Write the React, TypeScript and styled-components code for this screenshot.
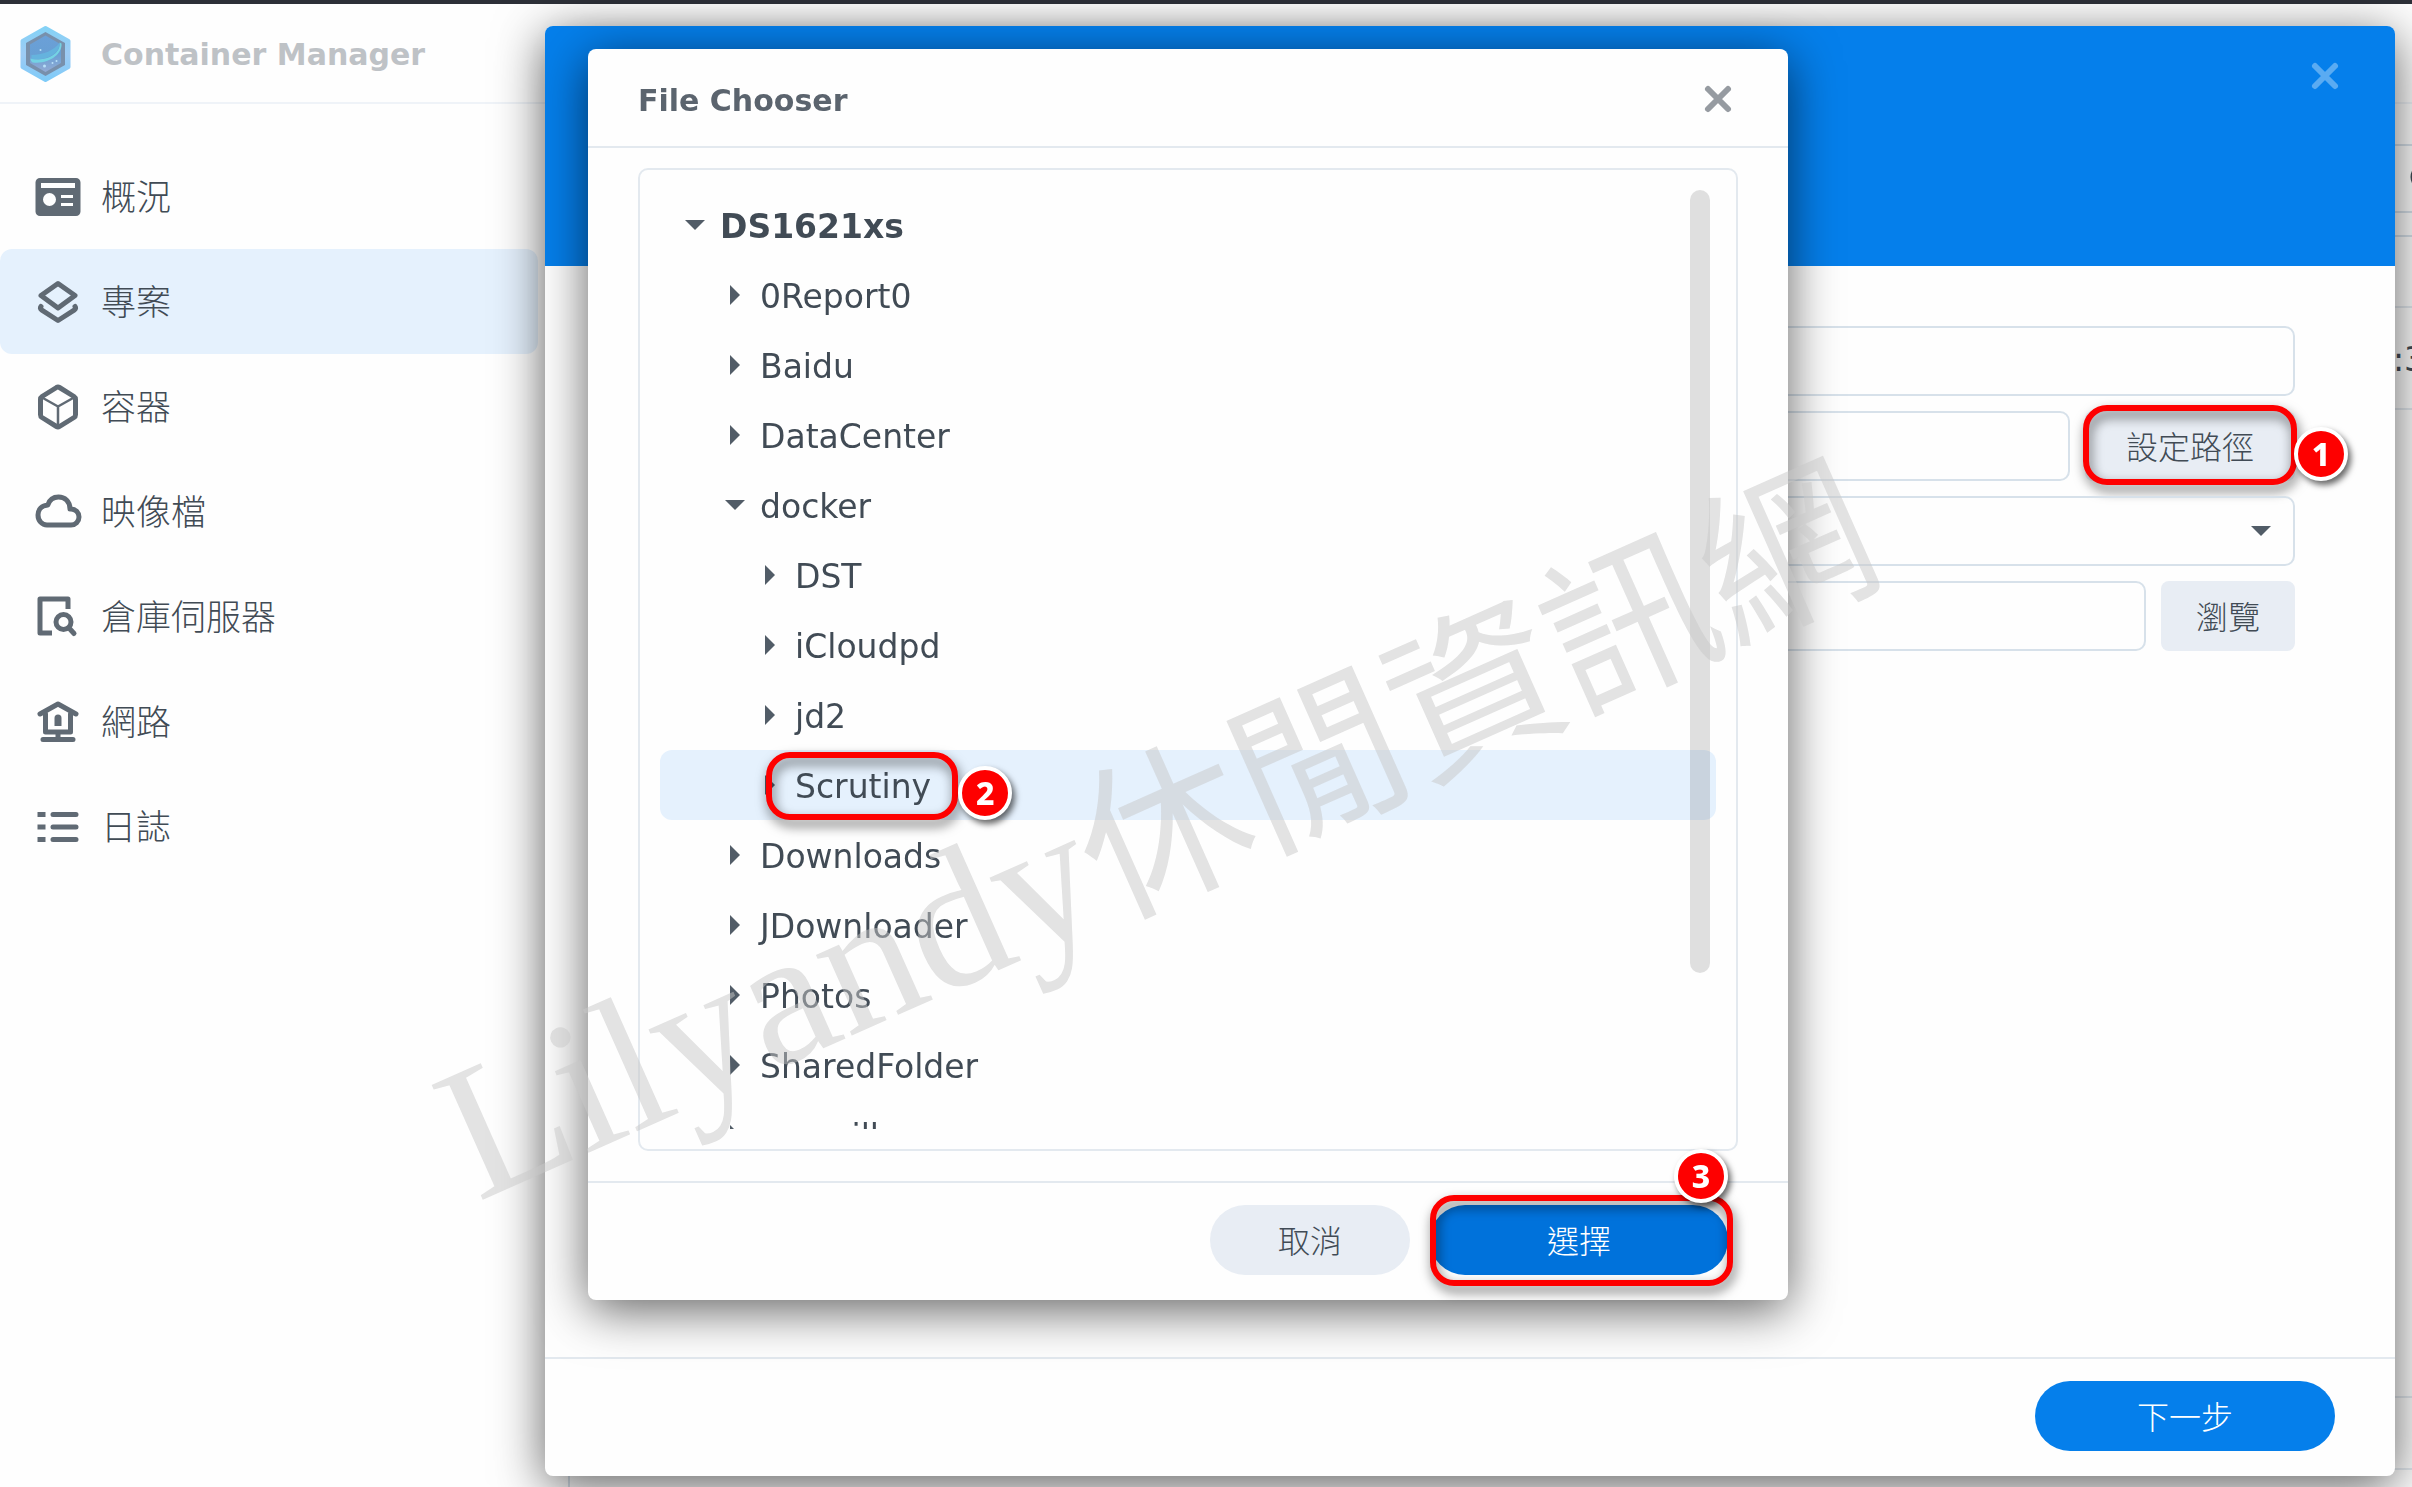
import React from "react";
import styled, { createGlobalStyle, css } from "styled-components";

const latin = `"DejaVu Sans", Verdana, "Noto Sans CJK TC", sans-serif`;
const cjk = `"Noto Sans CJK TC", "DejaVu Sans", sans-serif`;

const ink = "#414b55";
const muted = "#606a74";
const line = "#e3e9ef";
const fieldLine = "#d7e1ea";
const blue = "#057feb";

const GlobalStyle = createGlobalStyle`
  *, *::before, *::after { box-sizing: border-box; }
  body {
    margin: 0;
    background: #fefefe;
    color: ${ink};
    font-family: ${latin};
    overflow: hidden;
  }
  button, input, select { font: inherit; color: inherit; }
  button { border: 0; padding: 0; background: none; cursor: pointer; }
  ul { list-style: none; margin: 0; padding: 0; }
`;

/* ---------- application window ---------- */

const Page = styled.div`
  display: flex;
  flex-direction: column;
  height: 100vh;
  overflow: hidden;
`;

const TopStrip = styled.div`
  height: 4px;
  flex: none;
  background: #2d3038;
`;

const AppHeader = styled.header`
  display: flex;
  align-items: center;
  gap: 30px;
  height: 100px;
  padding: 2px 20px 0;
  flex: none;
  border-bottom: 2px solid #eff3f8;
`;

const AppTitle = styled.h1`
  margin: 0;
  padding-top: 2px;
  font-size: 30px;
  font-weight: 700;
  line-height: 40px;
  color: #bec2c6;
`;

const Workspace = styled.div`
  display: flex;
  flex: 1;
  min-height: 0;
`;

const Sidebar = styled.nav`
  width: 538px;
  padding-top: 40px;
  flex: none;
`;

const NavItem = styled.button<{ $active?: boolean }>`
  display: flex;
  align-items: center;
  gap: 18px;
  width: 100%;
  height: 105px;
  padding: 0 33px;
  border-radius: 12px;
  background: ${(p) => (p.$active ? "#e5f1fd" : "transparent")};
  font-family: ${cjk};
  font-size: 35px;
  font-weight: 300;
  line-height: 50px;
  text-align: left;
`;

const NavLabel = styled.span`
  padding-bottom: 4px;
`;

const Content = styled.main`
  display: flex;
  flex-direction: column;
  flex: 1;
  min-width: 0;
  padding: 40px 0 0 30px;
  overflow: hidden;
`;

const Toolbar = styled.div`
  display: flex;
  justify-content: flex-end;
  margin-bottom: 22px;
`;

const SearchBox = styled.button`
  width: 40px;
  height: 69px;
  padding-left: 36px;
  border: solid ${fieldLine};
  border-width: 2px 0 2px 2px;
  border-radius: 8px 0 0 8px;
  overflow: hidden;
  text-align: left;
`;

const Panel = styled.section`
  display: flex;
  flex-direction: column;
  flex: 1;
  border: solid ${fieldLine};
  border-width: 2px 0 0 2px;
`;

const PanelHead = styled.div`
  height: 71px;
  border-bottom: 2px solid ${line};
`;

const PanelRow = styled.div`
  display: flex;
  justify-content: flex-end;
  align-items: center;
  height: 102px;
  padding-top: 3px;
  border-bottom: 2px solid ${line};
  font-size: 33px;
  line-height: 40px;
`;

const Clock = styled.span`
  width: 19px;
  white-space: nowrap;
`;

const PanelFoot = styled.div`
  height: 74px;
  margin: auto 0 17px;
  border: solid ${line};
  border-width: 2px 0;
`;

/* ---------- dialogs ---------- */

const Layer = styled.div<{ $pad: string }>`
  position: fixed;
  inset: 0;
  display: flex;
  padding: ${(p) => p.$pad};
`;

const dialogBox = css`
  display: flex;
  flex-direction: column;
  border-radius: 8px;
  background: #fefefe;
  box-shadow: 0 10px 50px rgba(0, 0, 0, 0.62);
`;

const Wizard = styled.section`
  ${dialogBox}
  flex: 1;
`;

const WizardHead = styled.header`
  display: flex;
  justify-content: flex-end;
  align-items: flex-start;
  height: 240px;
  padding: 34px 54px;
  border-radius: 8px 8px 0 0;
  background: ${blue};
  color: #5aabf2;
`;

const CloseButton = styled.button`
  display: flex;
  width: 32px;
  height: 32px;
`;

const Form = styled.form`
  display: flex;
  flex-direction: column;
  gap: 15px;
  flex: 1;
  padding: 60px 100px 0 60px;
`;

const FormRow = styled.div`
  display: flex;
  gap: 15px;
  height: 70px;
`;

const Field = styled.input`
  flex: 1;
  min-width: 0;
  padding: 0 20px;
  border: 2px solid ${fieldLine};
  border-radius: 10px;
  background: transparent;
  font-size: 32px;
`;

const SelectWrap = styled.div`
  position: relative;
  display: flex;
  flex: 1;
`;

const SelectField = styled.select`
  flex: 1;
  padding: 0 60px 0 20px;
  border: 2px solid ${fieldLine};
  border-radius: 10px;
  background: transparent;
  appearance: none;
`;

const SelectCaret = styled.span`
  position: absolute;
  right: 24px;
  top: 30px;
  display: flex;
  pointer-events: none;
`;

const SquareButton = styled.button<{ $pad: number }>`
  height: 70px;
  padding: 0 ${(p) => p.$pad}px 3px;
  border-radius: 8px;
  background: #e8edf4;
  font-family: ${cjk};
  font-size: 32px;
  font-weight: 300;
  line-height: 46px;
`;

const DialogFoot = styled.footer`
  display: flex;
  justify-content: flex-end;
  gap: 20px;
  padding: 22px 60px 25px;
  border-top: 2px solid ${line};
`;

const PillButton = styled.button<{ $tone: "plain" | "primary" | "pressed"; $width: number }>`
  width: ${(p) => p.$width}px;
  height: 70px;
  padding-bottom: 2px;
  border-radius: 35px;
  background: ${(p) => ({ plain: "#e8edf4", primary: blue, pressed: "#0072db" }[p.$tone])};
  color: ${(p) => (p.$tone === "plain" ? ink : "#fff")};
  font-family: ${cjk};
  font-size: 32px;
  font-weight: 300;
  line-height: 46px;
`;

const Chooser = styled.section`
  ${dialogBox}
  width: 1200px;
`;

const ChooserHead = styled.header`
  display: flex;
  justify-content: space-between;
  align-items: center;
  height: 99px;
  flex: none;
  padding: 2px 54px 0 50px;
  border-bottom: 2px solid ${line};
  color: #969ba1;
`;

const ChooserTitle = styled.h2`
  margin: 0;
  padding-top: 4px;
  font-size: 30px;
  font-weight: 700;
  line-height: 40px;
  color: #5b646e;
`;

const TreeFrame = styled.div`
  flex: 1;
  min-height: 0;
  margin: 20px 50px 30px;
  padding: 20px;
  border: 2px solid ${line};
  border-radius: 10px;
`;

const TreeView = styled.div`
  position: relative;
  height: 100%;
  overflow: hidden;
`;

const TreeRow = styled.button<{ $depth: number; $selected?: boolean }>`
  display: flex;
  align-items: center;
  gap: 15px;
  width: 100%;
  height: 70px;
  padding-left: ${(p) => [25, 65, 100][p.$depth]}px;
  border-radius: 12px;
  background: ${(p) => (p.$selected ? "#e5f1fd" : "transparent")};
  font-size: 33px;
  font-weight: ${(p) => (p.$depth === 0 ? 700 : 400)};
  line-height: 40px;
  text-align: left;
`;

const Scrollbar = styled.div`
  position: absolute;
  top: 0;
  right: 6px;
  width: 20px;
  height: 783px;
  border-radius: 10px;
  background: rgba(0, 0, 0, 0.12);
`;

/* ---------- step marks ---------- */

const Marked = styled.span`
  position: relative;
  display: flex;
`;

const TreeLabel = styled(Marked)`
  padding-top: 4px;
`;

const Ring = styled.span<{ $inset: string }>`
  position: absolute;
  inset: ${(p) => p.$inset};
  border: 6px solid #fe0000;
  border-radius: 24px;
  filter: drop-shadow(2px 6px 6px rgba(0, 0, 0, 0.6));
  pointer-events: none;
`;

const Step = styled.span<{ $top: number; $right: number }>`
  position: absolute;
  top: ${(p) => p.$top}px;
  right: ${(p) => p.$right}px;
  width: 54px;
  height: 54px;
  border: 4px solid #fff;
  border-radius: 50%;
  background: #fe0000;
  box-shadow: 3px 4px 6px rgba(0, 0, 0, 0.6);
  color: #fff;
  font-family: "Noto Sans", sans-serif;
  font-size: 32px;
  font-weight: 800;
  line-height: 46px;
  text-align: center;
`;

const Watermark = styled.div`
  position: fixed;
  left: 48%;
  top: 56%;
  display: flex;
  align-items: baseline;
  transform: translate(-50%, -50%) rotate(-24deg);
  color: rgba(199, 199, 199, 0.5);
  font-family: "Liberation Serif", "Noto Sans CJK TC", serif;
  font-size: 170px;
  font-weight: 400;
  line-height: 170px;
  white-space: nowrap;
  pointer-events: none;
`;

const WatermarkLatin = styled.span`
  font-size: 192px;
`;

/* ---------- drawings ---------- */

const Cross = () => (
  <svg width="32" height="32" viewBox="0 0 32 32" fill="none" stroke="currentColor" strokeWidth="6" strokeLinecap="round">
    <path d="M6 6 26 26M26 6 6 26" />
  </svg>
);

const Caret = ({ open = false }: { open?: boolean }) => (
  <svg width="20" height="20" viewBox="0 0 20 20" fill="#515c67">
    {open ? <path d="M0 5h20L10 15z" /> : <path d="M5 0 15 10 5 20z" />}
  </svg>
);

const Icon = ({ children }: { children: React.ReactNode }) => (
  <svg width="50" height="50" viewBox="0 0 50 50" fill="none" stroke={muted} strokeWidth="5" strokeLinejoin="round" strokeLinecap="round">
    {children}
  </svg>
);

const Logo = () => (
  <svg width="51" height="58" viewBox="0 0 50 58">
    <defs>
      <linearGradient id="rim" x1="0" y1="0" x2="0" y2="1">
        <stop offset="0" stopColor="#84d2f6" />
        <stop offset="0.5" stopColor="#9ecbf5" />
        <stop offset="1" stopColor="#7fcbf8" />
      </linearGradient>
      <linearGradient id="core" x1="0" y1="0" x2="0" y2="1">
        <stop offset="0" stopColor="#6ba0d8" />
        <stop offset="0.5" stopColor="#689fd4" />
        <stop offset="1" stopColor="#93abd4" />
      </linearGradient>
    </defs>
    <path d="M25 3 48 16v26L25 55 2 42V16z" fill="url(#rim)" stroke="url(#rim)" strokeWidth="4" strokeLinejoin="round" />
    <path d="M25 7 44.500 18v22L25 51 5.500 40V18z" fill="#7890ac" />
    <path d="M25 10.500 40.500 19.500v18.500L25 47 9.500 38V19.500z" fill="url(#core)" />
    <path d="M39 17.500c2 10-12 20-29 16 0 2 1 3 2 4 17 2 30-9 29-19z" fill="#74d3e4" />
    <path d="M11 30c12 0 23-5 28-12 1 9-11 18-28 16z" fill="#65b3de" />
    <g fill="#b9e0f8">
      <circle cx="24" cy="41" r="1.500" />
      <circle cx="32" cy="38" r="1" />
      <circle cx="36" cy="36" r="1" />
      <circle cx="20" cy="25" r="1" />
    </g>
  </svg>
);

const navItems = [
  {
    label: "概況",
    icon: (
      <g stroke="none">
        <path
          fill={muted}
          fillRule="evenodd"
          d="M7 6h36a4.500 4.500 0 0 1 4.500 4.500v29A4.500 4.500 0 0 1 43 44H7a4.500 4.500 0 0 1-4.500-4.500v-29A4.500 4.500 0 0 1 7 6zM8 11v5h34v-5zM16.500 21a6.500 6.500 0 1 0 0 13 6.500 6.500 0 0 0 0-13zM28 23v3h12v-3zM28 31v3h12v-3z"
        />
      </g>
    ),
  },
  {
    label: "專案",
    active: true,
    icon: <path d="M25 6.500 42 18.500 25 31 8 18.500zM8 29.500c-1 1.500-.5 2.500.5 3.300L25 43.500l16.500-10.700c1-.8 1.500-1.800.5-3.300" />,
  },
  {
    label: "容器",
    icon: (
      <>
        <path d="M23.500 5.500q1.500-.9 3 0l14.500 9q1.500 1 1.500 2.800v15.400q0 1.800-1.500 2.800l-14.500 9q-1.500.9-3 0L9 35.500q-1.500-1-1.500-2.800V17.300q0-1.800 1.500-2.800z" />
        <path strokeWidth="2.500" d="M9 15.500 25 24.500 41 15.500M25 24.500V43" />
      </>
    ),
  },
  {
    label: "映像檔",
    icon: <path d="M14 38h24a7.800 7.800 0 0 0 0-16h-1C37 14 31.500 10 25.500 10c-5 0-9 2.800-10.700 8C9 18.500 5 22.500 5 28c0 5.800 4 10 9 10z" />,
  },
  {
    label: "倉庫伺服器",
    icon: (
      <>
        <path strokeLinecap="butt" d="M19 41H7V7h28v10" />
        <circle cx="30.500" cy="30" r="7.500" />
        <path d="M36 36 41 41.500" />
      </>
    ),
  },
  {
    label: "網路",
    icon: (
      <>
        <path d="M7 17 25 7l18 10M12.500 17v18h25V17M25 37v4M10 42.500h30" />
        <path fill={muted} stroke="none" d="M21.500 29v-8a3.500 3.500 0 0 1 7 0v8z" />
      </>
    ),
  },
  {
    label: "日誌",
    icon: (
      <>
        <path strokeLinecap="butt" d="M4.500 12.500h8M4.500 25h8M4.500 37.500h8" />
        <path d="M20 12.500h23M20 25h23M20 37.500h23" />
      </>
    ),
  },
];

const folders: { name: string; depth: number; open?: boolean; step?: number }[] = [
  { name: "DS1621xs", depth: 0, open: true },
  { name: "0Report0", depth: 1 },
  { name: "Baidu", depth: 1 },
  { name: "DataCenter", depth: 1 },
  { name: "docker", depth: 1, open: true },
  { name: "DST", depth: 2 },
  { name: "iCloudpd", depth: 2 },
  { name: "jd2", depth: 2 },
  { name: "Scrutiny", depth: 2, step: 2 },
  { name: "Downloads", depth: 1 },
  { name: "JDownloader", depth: 1 },
  { name: "Photos", depth: 1 },
  { name: "SharedFolder", depth: 1 },
  { name: "surveillance", depth: 1 },
];

export default function App() {
  return (
    <>
      <GlobalStyle />
      <Page>
        <TopStrip />
        <AppHeader>
          <Logo />
          <AppTitle>Container Manager</AppTitle>
        </AppHeader>
        <Workspace>
          <Sidebar>
            {navItems.map((item) => (
              <NavItem key={item.label} $active={item.active}>
                <Icon>{item.icon}</Icon>
                <NavLabel>{item.label}</NavLabel>
              </NavItem>
            ))}
          </Sidebar>
          <Content>
            <Toolbar>
              <SearchBox aria-label="Search">
                <svg width="30" height="30" viewBox="0 0 30 30" fill="none" stroke={ink} strokeWidth="3">
                  <circle cx="14" cy="15" r="12" />
                </svg>
              </SearchBox>
            </Toolbar>
            <Panel>
              <PanelHead />
              <PanelRow>
                <Clock>:3</Clock>
              </PanelRow>
              <PanelFoot />
            </Panel>
          </Content>
        </Workspace>
      </Page>

      <Layer $pad="26px 17px 11px 545px">
        <Wizard role="dialog" aria-label="Project">
          <WizardHead>
            <CloseButton aria-label="Close project">
              <Cross />
            </CloseButton>
          </WizardHead>
          <Form>
            <FormRow>
              <Field aria-label="Name" />
            </FormRow>
            <FormRow>
              <Field aria-label="Path" />
              <Marked>
                <SquareButton type="button" $pad={41}>設定路徑</SquareButton>
                <Ring $inset="-6px -2px -4px -2px" />
                <Step $top={16} $right={-53}>1</Step>
              </Marked>
            </FormRow>
            <FormRow>
              <SelectWrap>
                <SelectField aria-label="Source" />
                <SelectCaret>
                  <svg width="20" height="10" viewBox="0 0 20 10" fill="#515c67">
                    <path d="M0 0h20L10 10z" />
                  </svg>
                </SelectCaret>
              </SelectWrap>
            </FormRow>
            <FormRow>
              <Field aria-label="File" />
              <SquareButton type="button" $pad={35}>瀏覽</SquareButton>
            </FormRow>
          </Form>
          <DialogFoot>
            <PillButton $tone="primary" $width={300}>下一步</PillButton>
          </DialogFoot>
        </Wizard>
      </Layer>

      <Layer $pad="49px 0 187px 588px">
        <Chooser role="dialog" aria-label="File Chooser">
          <ChooserHead>
            <ChooserTitle>File Chooser</ChooserTitle>
            <CloseButton aria-label="Close">
              <Cross />
            </CloseButton>
          </ChooserHead>
          <TreeFrame>
            <TreeView>
              <ul>
                {folders.map((f) => (
                  <li key={f.name}>
                    <TreeRow $depth={f.depth} $selected={!!f.step}>
                      <Caret open={f.open} />
                      <TreeLabel>
                        {f.name}
                        {f.step && (
                          <>
                            <Ring $inset="-11px -27px -13px -29px" />
                            <Step $top={3} $right={-81}>{f.step}</Step>
                          </>
                        )}
                      </TreeLabel>
                    </TreeRow>
                  </li>
                ))}
              </ul>
              <Scrollbar />
            </TreeView>
          </TreeFrame>
          <DialogFoot>
            <PillButton $tone="plain" $width={200}>取消</PillButton>
            <Marked>
              <PillButton $tone="pressed" $width={298}>選擇</PillButton>
              <Ring $inset="-10px -5px -11px 0" />
              <Step $top={-56} $right={0}>3</Step>
            </Marked>
          </DialogFoot>
        </Chooser>
      </Layer>

      <Watermark>
        <WatermarkLatin>Lilyandy</WatermarkLatin>
        休閒資訊網
      </Watermark>
    </>
  );
}
